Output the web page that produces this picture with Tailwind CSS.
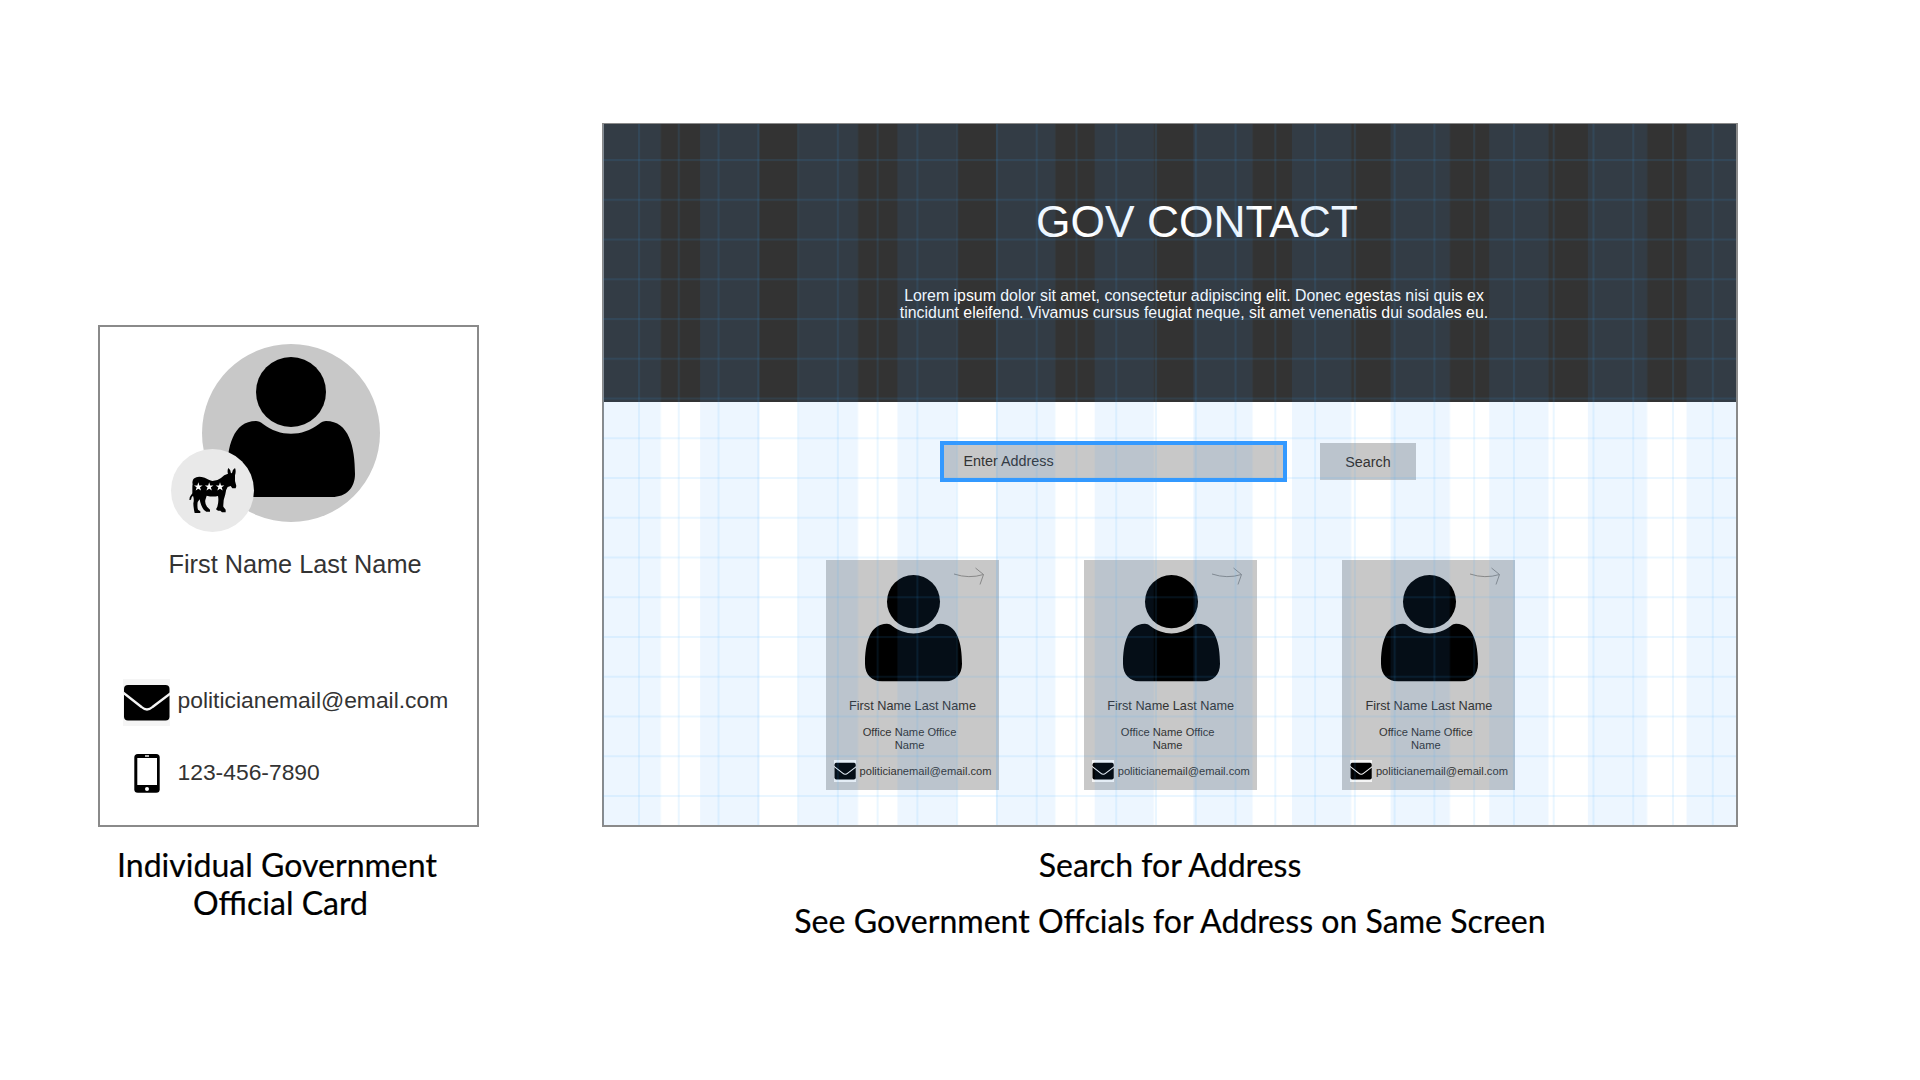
<!DOCTYPE html>
<html lang="en">
<head>
<meta charset="utf-8">
<title>Gov Contact</title>
<script src="https://cdn.jsdelivr.net/npm/@tailwindcss/browser@4"></script>
</head>
<body class="bg-white">
<svg class="hidden">
  <symbol id="person" viewBox="0 0 128 140" preserveAspectRatio="none">
    <circle cx="64" cy="35" r="35"/>
    <path d="M29 64C31 64 34 65 36 67C53 80 75 80 92 67C94 65 97 64 99 64C122 64 128 90 128 117C128 131 119 140 105 140H23C9 140 0 131 0 117C0 90 6 64 29 64Z"/>
  </symbol>
  <symbol id="mail" viewBox="0 0 47 47" preserveAspectRatio="none">
    <rect width="47" height="47" fill="#f5f5f5"/>
    <rect x="1" y="6" width="45.500" height="35.5" rx="4"/>
    <path d="M0 13.5L18.500 28Q24 33 29.500 28L48 14" fill="none" stroke="#f5f5f5" stroke-width="2.300"/>
  </symbol>
  <symbol id="arrow" viewBox="0 0 32 20">
    <path d="M1 7Q16 12 30.500 7.500M22.500 1L30.500 7.500L27 17.500" fill="none" stroke="#888" stroke-width="1"/>
  </symbol>
</svg>
<main class="flex h-[1080px] w-[1920px] overflow-hidden pl-[98px] font-['Liberation_Sans',Arial,sans-serif] text-[#333]">
  <section class="w-[381px] shrink-0 pt-[325px]">
    <div class="h-[502px] border-2 border-[#8a8a8a] pt-[17px]">
      <div class="relative ml-[102px] flex size-[178px] justify-center rounded-full bg-[#c8c8c8] pt-[13px]">
        <svg class="h-[140px] w-[128px] text-black" fill="currentColor"><use href="#person"/></svg>
        <div class="absolute top-[105px] -left-[31px] size-[83px] rounded-full bg-[#e9e9e9]">
          <svg class="size-[83px]" viewBox="33 27 249 249">
            <path d="M103 124Q97 128 97 142V160Q88 170 88 180L93 179Q94 170 99 167Q103 178 100 190Q100 203 104 219H121V214L114 209Q111 200 113 186L119 178Q122 198 132 210L139 215H150V209L141 200Q134 190 136 180L140 167Q158 172 174 168Q177 184 172 200L168 208L174 212H181L186 217H197V209L190 200Q189 182 196 163Q197 149 203 141L212 138L217 145H227L229 138L225 123V106Q229 92 225 84Q217 88 216 99L213 100Q212 88 205 84Q201 92 204 101Q192 104 183 114Q172 123 157 123Q147 120 134 113Q112 107 103 115Q97 118 97 132Z"/>
            <g fill="#fff">
              <path id="star" d="M115 127L118 136.500H128L120 142L123 151.500L115 146L107 151.500L110 142L102 136.500H112Z"/>
              <use href="#star" x="32.500"/>
              <use href="#star" x="65"/>
            </g>
          </svg>
        </div>
      </div>
      <div class="mt-[28px] pl-[68.500px] text-[25.300px] leading-[28px] whitespace-nowrap">First Name Last Name</div>
      <div class="mt-[101px] ml-[23px] flex">
        <svg class="size-[47px]"><use href="#mail"/></svg>
        <div class="mt-[9px] ml-[7.500px] text-[22.850px] leading-[24px] whitespace-nowrap">politicianemail@email.com</div>
      </div>
      <div class="mt-[28px] ml-[34px] flex">
        <svg class="h-[39px] w-[26px]" viewBox="0 0 26 39">
          <rect x="0.300" width="25.400" height="38.700" rx="3.500"/>
          <rect x="3.300" y="4" width="19.700" height="27" fill="#fff"/>
          <rect x="11" y="1.300" width="4" height="1.400" fill="#fff"/>
          <circle cx="13" cy="35" r="2" fill="#fff"/>
        </svg>
        <div class="mt-[6px] ml-[17.500px] text-[22.850px] leading-[24px] whitespace-nowrap">123-456-7890</div>
      </div>
    </div>
    <div class="mt-[19px] -ml-[21px] w-[400px] text-center font-['Lato',sans-serif] text-[32.050px] leading-[37.700px] text-black [-webkit-text-stroke:0.2px]">Individual Government<br><span class="pl-[7px]">Official Card</span></div>
  </section>

  <section class="ml-[123px] w-[1136px] shrink-0 pt-[123px]">
    <div class="relative h-[704px] border-2 border-t border-[#8a8a8a]">
      <header class="flex h-[278px] flex-col items-center bg-[#333] text-center text-white">
        <h1 class="mt-[73px] ml-[54px] text-[44.350px] leading-[50px]">GOV CONTACT</h1>
        <p class="mt-[40px] ml-[48px] text-[15.880px] leading-[17px] whitespace-nowrap">Lorem ipsum dolor sit amet, consectetur adipiscing elit. Donec egestas nisi quis ex<br>tincidunt eleifend. Vivamus cursus feugiat neque, sit amet venenatis dui sodales eu.</p>
      </header>
      <div class="mt-[39px] ml-[336px] flex">
        <div class="h-[41px] w-[347px] border-4 border-[#39f] bg-[#c8c8c8] pt-[7px] pl-[19.500px] text-[14.350px] leading-[18px]">Enter Address</div>
        <div class="mt-[2px] ml-[33px] h-[37px] w-[96px] bg-[#c8c8c8] pt-[10px] text-center text-[14.350px] leading-[18px]">Search</div>
      </div>
      <div id="cards" class="mt-[78px] ml-[222px] flex gap-[85.200px]"></div>
      <svg class="absolute -top-px -left-[2px] h-[704px] w-[1136px]" viewBox="602 123 1136 704">
        <defs>
          <pattern id="bands" x="601.500" y="0" width="98.640" height="1080" patternUnits="userSpaceOnUse"><rect width="59.300" height="1080" fill="#39f" fill-opacity=".09"/></pattern>
          <pattern id="cols" x="638" y="0" width="39.770" height="1080" patternUnits="userSpaceOnUse"><rect width="2" height="1080" fill="#3af" fill-opacity=".1"/></pattern>
          <pattern id="rows" x="0" y="159" width="1920" height="39.750" patternUnits="userSpaceOnUse"><rect width="1920" height="2" fill="#3af" fill-opacity=".1"/></pattern>
        </defs>
        <rect x="603" y="124" width="1133" height="701" fill="url(#bands)"/>
        <rect x="603" y="124" width="1133" height="701" fill="url(#cols)"/>
        <rect x="603" y="124" width="1133" height="701" fill="url(#rows)"/>
      </svg>
    </div>
    <div class="mt-[19px] text-center font-['Lato',sans-serif] text-[32.100px] leading-[37.700px] text-black [-webkit-text-stroke:0.2px]">Search for Address</div>
    <div class="mt-[18px] text-center font-['Lato',sans-serif] text-[32.100px] leading-[37.700px] whitespace-nowrap text-black [-webkit-text-stroke:0.2px]">See Government Offcials for Address on Same Screen</div>
  </section>
</main>
<script>
document.getElementById('cards').innerHTML = Array(3).fill(`
  <article class="h-[230px] w-[173px] bg-[#c8c8c8] whitespace-nowrap">
    <svg class="mt-[7px] ml-[127px] h-[20px] w-[32px]"><use href="#arrow"/></svg>
    <svg class="-mt-[12px] ml-[39px] h-[106.500px] w-[97px] text-black" fill="currentColor"><use href="#person"/></svg>
    <div class="mt-[17.500px] w-[173px] text-center text-[12.700px] leading-[14px]">First Name Last Name</div>
    <div class="mt-[13px] -ml-[3px] w-[173px] text-center text-[11.150px] leading-[12.700px]">Office Name Office<br>Name</div>
    <div class="mt-[9px] ml-[8px] flex">
      <svg class="h-[22px] w-[22px]"><use href="#mail"/></svg>
      <div class="mt-[5px] ml-[3.500px] text-[11.150px] leading-[12px]">politicianemail@email.com</div>
    </div>
  </article>`).join('');
</script>
</body>
</html>
